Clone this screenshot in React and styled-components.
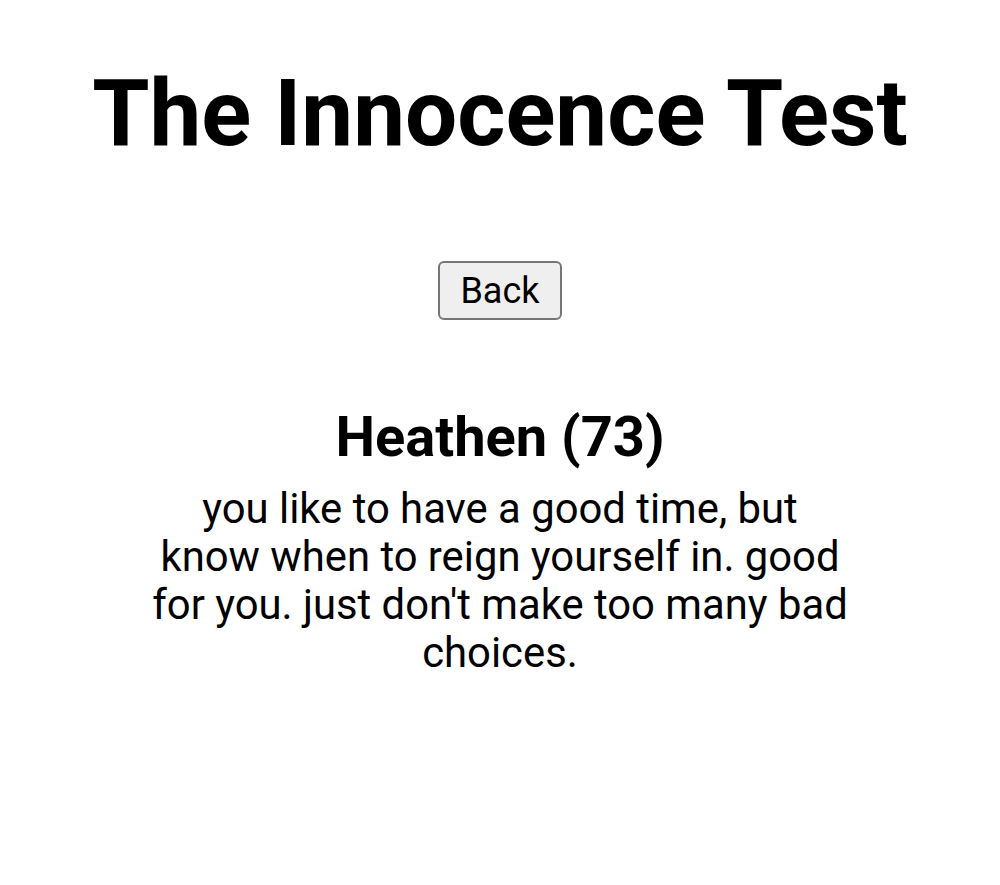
import React from 'react'
import styled, { createGlobalStyle } from 'styled-components'

const GlobalStyle = createGlobalStyle`
  body {
    margin: 0;
    background: #ffffff;
    font-family: Roboto, "Noto Sans", sans-serif;
    color: #000000;
  }
`

const Page = styled.div`
  display: flex;
  flex-direction: column;
  align-items: center;
  text-align: center;
  padding-top: 59px;
`

const Title = styled.h1`
  font-size: 92.5px;
  font-weight: 700;
  margin: 0 0 93px 0;
`

const BackButton = styled.button`
  font-family: Roboto, sans-serif;
  font-size: 36px;
  color: #000;
  background: #efefef;
  border: 2px solid #767676;
  border-radius: 6px;
  padding: 6px 20px;
  height: 59px;
  cursor: pointer;
`

const Result = styled.div`
  margin-top: 84px;
  width: 700px;
`

const ResultName = styled.h2`
  font-size: 56px;
  font-weight: 700;
  margin: 0 0 15px 0;
`

const Description = styled.p`
  font-size: 41.8px;
  line-height: 48px;
  margin: 0;
`

export default function App() {
  return (
    <>
      <GlobalStyle />
      <Page>
        <Title>The Innocence Test</Title>
        <BackButton>Back</BackButton>
        <Result>
          <ResultName>Heathen (73)</ResultName>
          <Description>
            you like to have a good time, but know when to reign yourself in. good for you. just don't make too many bad choices.
          </Description>
        </Result>
      </Page>
    </>
  )
}
